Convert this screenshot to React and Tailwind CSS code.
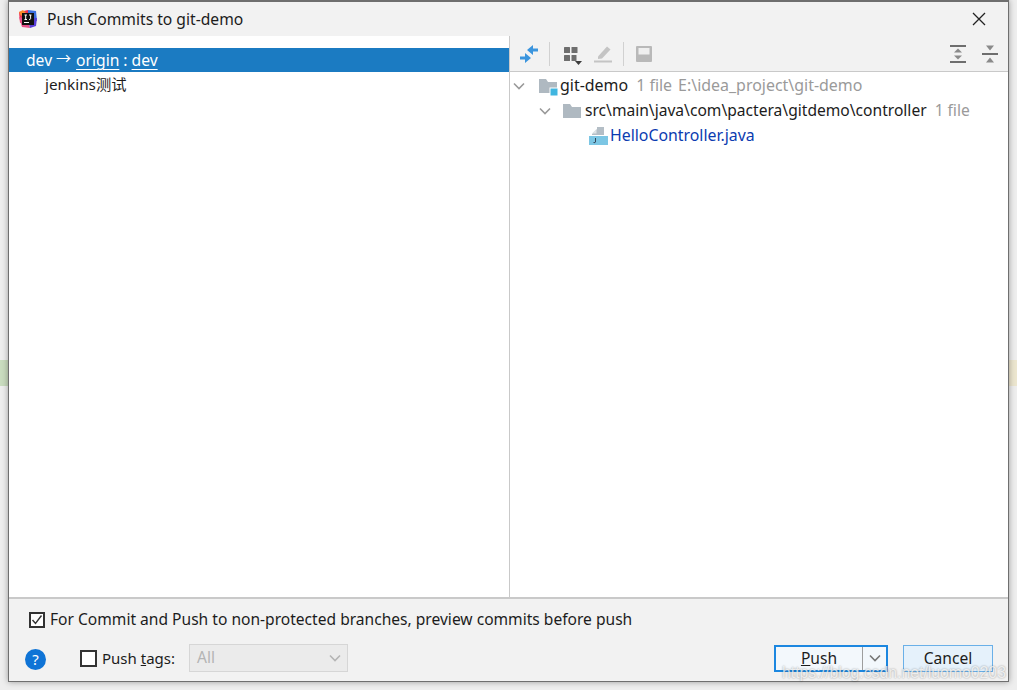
const font = { fontFamily: '"Noto Sans", "Noto Sans CJK SC", sans-serif' };

function AppLogo() {
  return (
    <svg width="20" height="20" viewBox="0 0 20 20">
      <path d="M1 3 L10 1 L10 10 L2 14 Z" fill="#f0304f" />
      <path d="M10 1 L18 2 L19 12 L10 10 Z" fill="#3b6fe0" />
      <path d="M1 8 L4 18 L12 19 L10 10 Z" fill="#e8508a" />
      <path d="M12 19 L18 17 L19 9 L10 10 Z" fill="#5a3fd8" />
      <path d="M1 3 L5 1 L8 4 L3 7 Z" fill="#fb8c2c" />
      <rect x="4" y="4" width="12" height="12" fill="#111" />
      <rect x="6" y="13" width="5" height="1" fill="#fff" />
      <path d="M6.5 6 H9 M7.7 6 V10.5 M6.5 10.5 H9 M11 6 H13.5 M12.6 6 V9.8 Q12.6 10.6 11 10.4" stroke="#fff" strokeWidth="1" fill="none" />
    </svg>
  );
}

function Chevron({ color = '#9a9a9a', size = 12 }) {
  return (
    <svg width={size} height={size} viewBox="0 0 12 12">
      <path d="M1 3.5 L6 8.5 L11 3.5" stroke={color} strokeWidth="1.6" fill="none" />
    </svg>
  );
}

function Folder({ badge }) {
  return (
    <svg width="20" height="18" viewBox="0 0 20 18">
      <path d="M0 1 H7 L9 4 H18 V15 H0 Z" fill="#afb9c1" />
      {badge && <rect x="11" y="10" width="8" height="8" fill="#40b6e0" stroke="#fff" strokeWidth="1" />}
    </svg>
  );
}

function JavaFile() {
  return (
    <svg width="20" height="20" viewBox="0 0 20 20">
      <path d="M3 8 L8 3 V1 H15 V9 H3 Z" fill="#b4bec6" />
      <path d="M3 7.5 L7.5 3 V7.5 Z" fill="#dfe3e6" />
      <rect x="0" y="10" width="19" height="9" fill="#7cc6e4" />
      <path d="M6.5 12 V16 Q6.5 17 4.5 16.5" stroke="#33475a" strokeWidth="1" fill="none" />
    </svg>
  );
}

function ToolbarDivider() {
  return <div className="w-px h-[24px] bg-[#d1d1d1]" />;
}

function Toolbar() {
  return (
    <div className="h-[36px] flex items-center border-b border-[#c9c9c9] bg-[#f2f2f2] pl-[9px] pr-[9px]">
      <svg width="20" height="20" viewBox="0 0 20 20">
        <path d="M1 12.5 H6 V9 L12 14 L6 19 V15.5 H1 Z" fill="#3b95de" />
        <path d="M19 4.5 H14 V1 L8 6 L14 11 V7.5 H19 Z" fill="#3b95de" />
      </svg>
      <div className="ml-[10px] mr-[12px]"><ToolbarDivider /></div>
      <svg className="overflow-visible" width="20" height="20" viewBox="0 0 20 20">
        <rect x="2" y="3" width="6" height="6" rx="0.5" fill="#6e6e6e" />
        <rect x="9.5" y="3" width="6" height="6" rx="0.5" fill="#6e6e6e" />
        <rect x="2" y="11" width="6" height="6" rx="0.5" fill="#6e6e6e" />
        <rect x="9.5" y="11" width="5" height="6" rx="0.5" fill="#6e6e6e" />
        <path d="M13 17 H20 L16.5 21 Z" fill="#3c3c3c" />
      </svg>
      <svg className="ml-[11px]" width="20" height="20" viewBox="0 0 20 20">
        <path d="M5 12.5 L14 2.5 L17.5 5.5 L9 14.5 L5 15 Z" fill="#c4c4c4" />
        <rect x="1" y="16.5" width="18" height="2" fill="#c4c4c4" />
      </svg>
      <div className="ml-[10px] mr-[11px]"><ToolbarDivider /></div>
      <svg width="18" height="18" viewBox="0 0 18 18">
        <rect x="1" y="1" width="16" height="16" rx="1" fill="#b9b9b9" />
        <rect x="3.5" y="3" width="11" height="6.5" fill="#efefef" />
      </svg>
      <div className="ml-auto flex items-center gap-[14px]">
        <svg width="18" height="18" viewBox="0 0 18 18">
          <rect x="1" y="0" width="16" height="2" fill="#6e6e6e" />
          <rect x="1" y="16" width="16" height="2" fill="#6e6e6e" />
          <path d="M5 7.5 L9 3.5 L13 7.5 Z M5 10.5 L9 14.5 L13 10.5 Z" fill="#8a8a8a" />
        </svg>
        <svg width="18" height="18" viewBox="0 0 18 18">
          <rect x="1" y="8" width="16" height="2" fill="#6e6e6e" />
          <path d="M5 0.5 H13 L9 5.5 Z M5 17.5 H13 L9 12.5 Z" fill="#8a8a8a" />
        </svg>
      </div>
    </div>
  );
}

function ChangesTree() {
  return (
    <div className="pt-[1px] leading-[25px] text-[#1c1c1c]">
      <div className="h-[25px] flex items-center pl-[3px] text-[15.95px]">
        <Chevron />
        <span className="ml-[14px] mt-[2px] flex"><Folder badge /></span>
        <span className="ml-[1px]">git-demo</span>
        <span className="ml-[8px] text-[#9a9a9a]">1 file</span>
        <span className="ml-[6px] text-[#9a9a9a]">E:\idea_project\git-demo</span>
      </div>
      <div className="h-[25px] flex items-center pl-[29px] text-[15.6px]">
        <Chevron />
        <span className="ml-[12px] mt-[2px] flex"><Folder /></span>
        <span className="ml-[2px]">src\main\java\com\pactera\gitdemo\controller</span>
        <span className="ml-[8px] text-[#9a9a9a]">1 file</span>
      </div>
      <div className="h-[25px] flex items-center pl-[79px] text-[15.85px]">
        <JavaFile />
        <span className="ml-[1px] text-[#0b3bb0]">HelloController.java</span>
      </div>
    </div>
  );
}

function CommitList() {
  return (
    <div className="w-[501px] border-r border-[#c9c9c9] bg-white pt-[12px] text-[15.65px]">
      <div className="h-[24px] bg-[#1b7bc2] text-white pl-[17px] pt-[2px] flex items-center leading-none">
        <span>dev</span>
        <span className="ml-[4px] mr-[3px] w-[17px] text-[15px] -translate-y-[3px]">→</span>
        <span className="underline underline-offset-3">origin</span>
        <span className="mx-[4px]">:</span>
        <span className="underline underline-offset-3">dev</span>
      </div>
      <div className="h-[25px] pl-[36px] flex items-center text-[15.3px] text-[#1c1c1c]">jenkins测试</div>
    </div>
  );
}

function Footer() {
  return (
    <div className="h-[84px] border-t-2 border-[#c9c9c9] bg-[#f2f2f2] pl-[20px] pr-[15px] text-[15.58px] text-[#1c1c1c]">
      <div className="h-[40px] flex items-center pt-[2px]">
        <span className="w-[16px] h-[16px] border-2 border-[#333] bg-white flex items-center justify-center">
          <svg width="12" height="12" viewBox="0 0 12 12">
            <path d="M1.5 6 L4.5 9.5 L10.5 1.5" stroke="#333" strokeWidth="1.4" fill="none" />
          </svg>
        </span>
        <span className="ml-[5px]">For Commit and Push to non-protected branches, preview commits before push</span>
      </div>
      <div className="flex items-center h-[30px] mt-[4px]">
        <span className="w-[21px] h-[21px] mt-[2px] -ml-[4px] rounded-full bg-[#0f74d6] text-white text-[15px] leading-none flex items-center justify-center">?</span>
        <span className="ml-[34px] w-[17px] h-[17px] border-2 border-[#333] bg-white" />
        <span className="ml-[5px] w-[73px] whitespace-nowrap text-[15px]">Push <span className="underline">t</span>ags:</span>
        <div className="ml-[14px] w-[159px] h-[28px] border border-[#d6d6d6] bg-[#ebebeb] text-[#b4b4b4] flex items-center justify-between pl-[7px] pr-[6px]">
          <span>All</span>
          <Chevron color="#b4b4b4" />
        </div>
        <div className="ml-auto flex items-center">
          <div className="w-[114px] h-[27px] border-2 border-[#1c87e0] bg-[#f3f8fc] flex items-center">
            <span className="w-[87px] text-center border-r border-[#9e9e9e] h-full leading-[23px]"><span className="underline">P</span>ush</span>
            <span className="flex-1 flex justify-center"><Chevron color="#777" /></span>
          </div>
          <div className="ml-[15px] w-[90px] h-[27px] border border-[#6ab0e8] bg-[#e5f1fb] text-center leading-[25px]">Cancel</div>
        </div>
      </div>
    </div>
  );
}

export default function App() {
  return (
    <div className="relative w-[1017px] h-[690px] overflow-hidden bg-[#eeeeee]" style={font}>
      {/* the IDE behind the dialog */}
      <div className="absolute left-0 right-0 top-[360px] h-[26px] bg-[#c9dcbf]" />
      <div className="absolute left-[1000px] right-0 top-[360px] h-[26px] bg-[#ece6cf]" />

      {/* dialog window */}
      <div className="absolute left-[8px] top-0 w-[1001px] h-[682px] flex flex-col border border-t-2 border-[#6f6f6f] bg-[#f2f2f2] shadow-[0_0_6px_rgba(0,0,0,0.35)]">
        <div className="h-[34px] shrink-0 flex items-center pl-[9px] pr-[22px]">
          <AppLogo />
          <span className="ml-[9px] mt-[1px] text-[15.65px] text-[#1c1c1c]">Push Commits to git-demo</span>
          <svg className="ml-auto" width="14" height="14" viewBox="0 0 14 14">
            <path d="M1 1 L13 13 M13 1 L1 13" stroke="#222" strokeWidth="1.3" />
          </svg>
        </div>
        <div className="flex-1 flex min-h-0">
          <CommitList />
          <div className="flex-1 bg-white flex flex-col">
            <Toolbar />
            <ChangesTree />
          </div>
        </div>
        <Footer />
      </div>

      {/* blog watermark */}
      <div className="absolute left-[782px] top-[661px] text-[15.8px] text-white/75 whitespace-nowrap [text-shadow:0_0_2px_rgba(0,0,0,0.4)]" style={{ fontFamily: '"Liberation Sans", sans-serif' }}>
        https://blog.csdn.net/luomo0203
      </div>
    </div>
  );
}
